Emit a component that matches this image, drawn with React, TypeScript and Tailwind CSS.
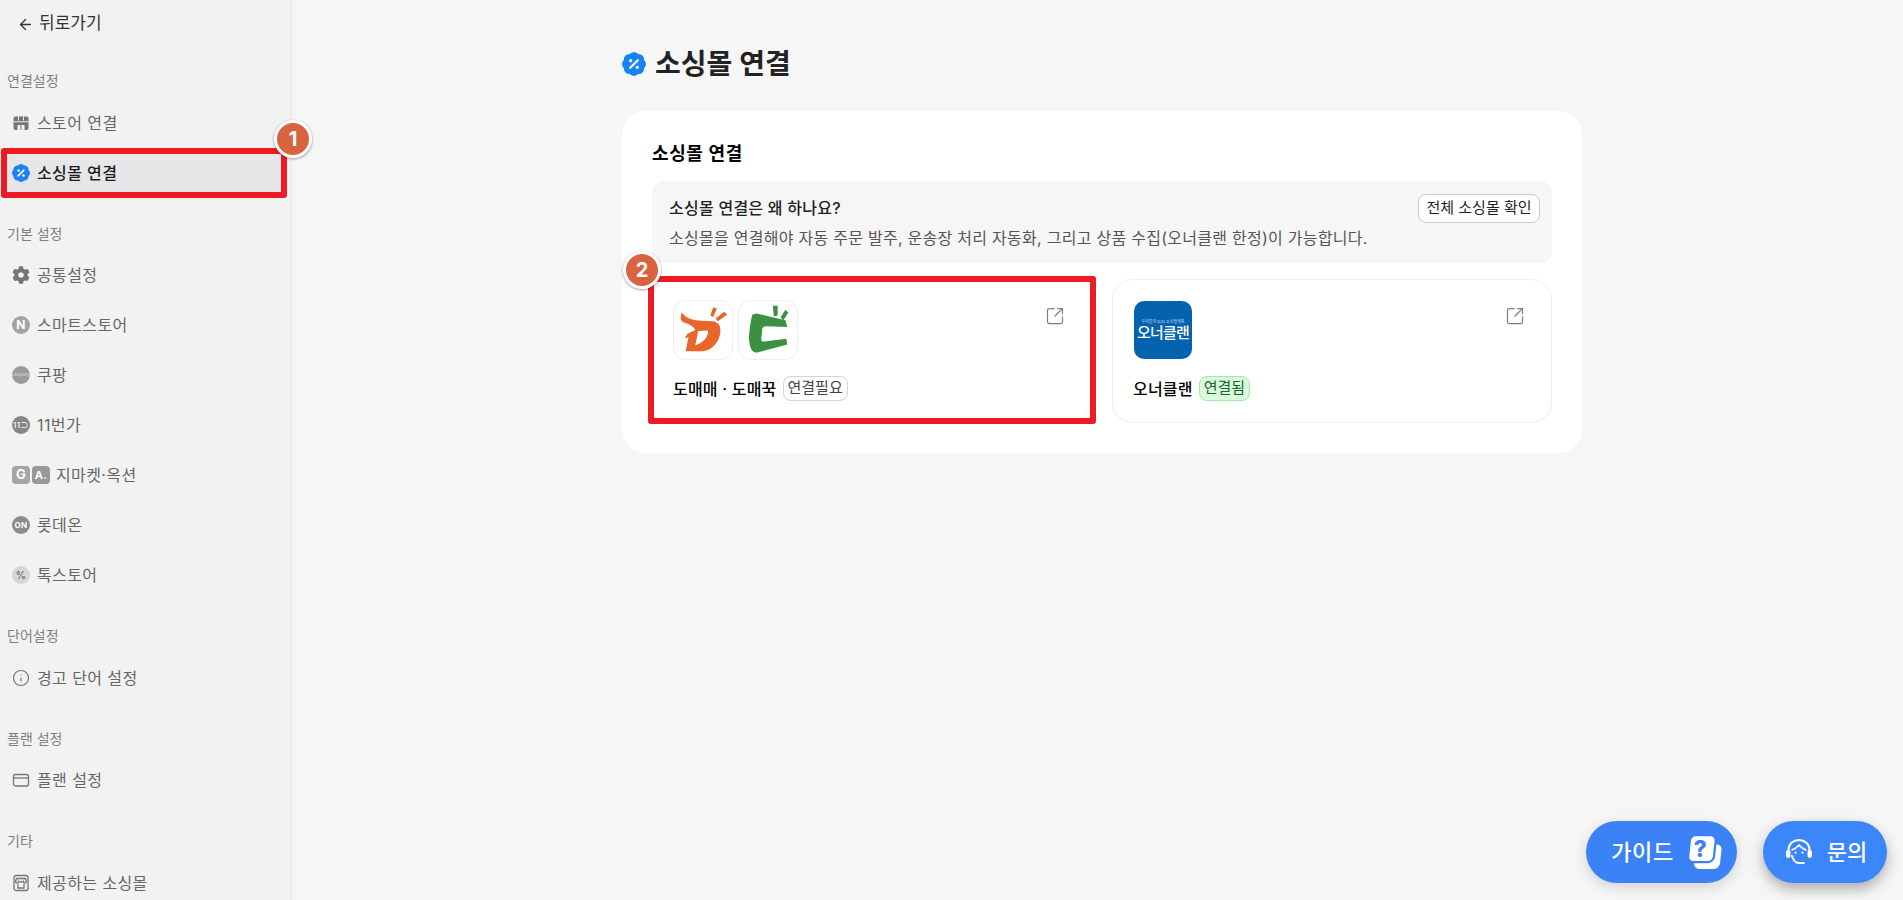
import { ArrowLeft, Info, SquareArrowOutUpRight } from "lucide-react"
import { FaCog } from "react-icons/fa"
import type { ReactNode } from "react"

const PercentBadge = ({ className }: { className: string }) => (
  <svg viewBox="1 1 22 22" className={className}>
    <path
      fill="#1a82f7"
      stroke="#1a82f7"
      strokeWidth="2"
      d="M3.85 8.62a4 4 0 0 1 4.78-4.77 4 4 0 0 1 6.74 0 4 4 0 0 1 4.78 4.78 4 4 0 0 1 0 6.74 4 4 0 0 1-4.77 4.78 4 4 0 0 1-6.75 0 4 4 0 0 1-4.78-4.77 4 4 0 0 1 0-6.76Z"
    />
    <path d="M15.5 8.5l-7 7" stroke="#fff" strokeWidth="2" strokeLinecap="round" />
    <circle cx="9" cy="9" r="1.5" fill="#fff" />
    <circle cx="15" cy="15" r="1.5" fill="#fff" />
  </svg>
)

const StoreIcon = () => (
  <svg viewBox="0 0 18 18" className="w-[18px] h-[18px]">
    <rect x="1.5" y="2.5" width="15" height="13.5" rx="2" fill="#757575" />
    <path d="M1.5 7.8h15" stroke="#f2f2f2" strokeWidth="1" />
    <path d="M6.5 2.5v4M11.5 2.5v4" stroke="#f2f2f2" strokeWidth="1" />
    <path d="M5.5 11h7v5h-7z" fill="#f2f2f2" />
    <path d="M9 11v5" stroke="#757575" strokeWidth="1" />
  </svg>
)

const Circle = ({ bg, children }: { bg: string; children: ReactNode }) => (
  <span className={`w-[18px] h-[18px] rounded-full flex items-center justify-center text-white font-bold ${bg}`}>
    {children}
  </span>
)

const PlanIcon = () => (
  <svg viewBox="0 0 18 18" className="w-[18px] h-[18px]" fill="none" stroke="#757575" strokeWidth="1.3">
    <rect x="1.5" y="3.5" width="15" height="11.5" rx="2" />
    <path d="M1.5 7h15" />
  </svg>
)

const ShopIcon = () => (
  <svg viewBox="0 0 18 18" className="w-[18px] h-[18px]" fill="none" stroke="#757575" strokeWidth="1.3">
    <rect x="2" y="1.5" width="14" height="15" rx="2" />
    <path d="M4.5 4.5h9l1 3a1.5 1.5 0 0 1-3 0 1.5 1.5 0 0 1-2.5 0 1.5 1.5 0 0 1-2.5 0 1.5 1.5 0 0 1-3 0z" />
    <path d="M6 10v4h6v-4" />
  </svg>
)

const SideItem = ({ icon, label, active }: { icon: ReactNode; label: string; active?: boolean }) => (
  <div
    className={`h-10 rounded-md flex items-center gap-[7px] px-1.5 text-base tracking-[0.4px] ${active ? "bg-[#e6e6e8] text-[#1c1c1c] font-medium" : "text-[#666666]"}`}
  >
    {icon}
    <span>{label}</span>
  </div>
)

const SideSection = ({ title, children }: { title: string; children: ReactNode }) => (
  <div className="mb-[31px]">
    <p className="h-5 leading-5 text-sm text-[#808080] pl-px mb-[11.5px]">{title}</p>
    <div className="flex flex-col gap-2.5">{children}</div>
  </div>
)

const Marker = ({ n, className }: { n: number; className: string }) => (
  <span
    className={`absolute z-10 w-[38px] h-[38px] rounded-full bg-[#d9633f] border-[3px] border-white shadow-[0_1px_3px_rgba(0,0,0,0.4)] flex items-center justify-center text-white text-xl font-bold ${className}`}
  >
    {n}
  </span>
)

const Sidebar = () => (
  <aside className="relative z-10 w-[292px] h-full shrink-0 bg-[#f2f2f2] border-r border-[#e6e6e6] pl-1.5 pr-[9px]">
    <div className="h-12 flex items-center gap-[5px] pl-[11px] text-[#333333] text-[17px] mb-[23px]">
      <ArrowLeft className="w-[17px] h-[17px]" strokeWidth={1.8} />
      <span>뒤로가기</span>
    </div>
    <SideSection title="연결설정">
      <SideItem icon={<StoreIcon />} label="스토어 연결" />
      <div className="relative">
        <SideItem active icon={<PercentBadge className="w-[18px] h-[18px]" />} label="소싱몰 연결" />
        <div className="absolute -inset-x-[5px] -inset-y-[5px] border-[6px] border-[#ed1c24] rounded-[3px]" />
        <Marker n={1} className="left-[268px] -top-[33px]" />
      </div>
    </SideSection>
    <SideSection title="기본 설정">
      <SideItem icon={<FaCog className="w-[18px] h-[18px] text-[#757575]" />} label="공통설정" />
      <SideItem icon={<Circle bg="bg-[#a3a3a3]"><span className="text-[12px] leading-none">N</span></Circle>} label="스마트스토어" />
      <SideItem icon={<Circle bg="bg-[#9a9a9a]"><span className="text-[4px] leading-none opacity-70 font-normal">coupang</span></Circle>} label="쿠팡" />
      <SideItem icon={<Circle bg="bg-[#868686]"><span className="text-[8px] leading-none font-medium">11⊃</span></Circle>} label="11번가" />
      <SideItem
        icon={
          <span className="flex gap-0.5 -mr-px">
            <span className="w-[18px] h-[18px] rounded-[4px] bg-[#a5a5a5] flex items-center justify-center text-white text-[13px] font-bold">G</span>
            <span className="w-[18px] h-[18px] rounded-[4px] bg-[#999999] flex items-center justify-center text-white text-[11px] font-bold">A.</span>
          </span>
        }
        label="지마켓·옥션"
      />
      <SideItem icon={<Circle bg="bg-[#8c8c8c]"><span className="text-[8px] leading-none">ON</span></Circle>} label="롯데온" />
      <SideItem icon={<Circle bg="bg-[#d6d6d6]"><span className="text-[10px] leading-none text-[#777777]">%</span></Circle>} label="톡스토어" />
    </SideSection>
    <SideSection title="단어설정">
      <SideItem icon={<Info className="w-[18px] h-[18px] text-[#757575]" strokeWidth={1.6} />} label="경고 단어 설정" />
    </SideSection>
    <SideSection title="플랜 설정">
      <SideItem icon={<PlanIcon />} label="플랜 설정" />
    </SideSection>
    <SideSection title="기타">
      <SideItem icon={<ShopIcon />} label="제공하는 소싱몰" />
    </SideSection>
  </aside>
)

const DomaeLogo = () => (
  <svg viewBox="0 0 60 60" className="w-full h-full">
    <path
      fill="#e7662a"
      fillRule="evenodd"
      d="M8 12C11 16 14 18 20 19.500C26 21 34 20.500 40 21C45 21.500 48 25 48 30C48 41 40 52 28 52L12 52L15 37.500L11 38.500L14 34L22 30C20 26 15 23.500 11 22.500C7 21.500 6 18 8 12ZM25 31L34 30.500C35.500 30.500 35.500 33 34.500 35.500C33 40 28 44 22 46Z"
    />
    <path fill="#e7662a" d="M40.500 6.500L44.500 8L40.500 16.500L37.500 15ZM52 11L55 14L45.500 21L43 18Z" />
  </svg>
)

const DomaeggLogo = () => (
  <svg viewBox="0 0 60 60" className="w-full h-full">
    <path
      fill="#3a9142"
      d="M18 13L48 20L50 27L28 26C25 26 24 28 24 30L23 39C23 41 24 42 26 42L49 39L50 45L20 53C16 54 13 52 12 48C10 42 10 36 11 30C12 22 13 16 14 14Z"
    />
    <path fill="#3a9142" d="M35 5l5 0 0 10-4 1zM48 9l3 3-5 8-3-3z" />
  </svg>
)

const OwnerclanLogo = () => (
  <div className="w-[58px] h-[58px] ml-px mt-px rounded-[10px] bg-[#0562ae] flex flex-col items-center justify-center text-white">
    <span className="text-[4px] leading-[5px] opacity-70 whitespace-nowrap">우리들의 B2B 소싱플랫폼</span>
    <span className="text-[15px] leading-[18px] font-medium tracking-[-0.8px] whitespace-nowrap">오너클랜</span>
  </div>
)

const GuideIcon = () => (
  <svg viewBox="0 0 32 32" className="w-9 h-9 -my-1">
    <rect x="7" y="9" width="23" height="22" rx="5" fill="#fff" transform="skewX(-6) translate(3 0)" />
    <rect x="2" y="1" width="23" height="24" rx="5" fill="#fff" stroke="#3b82f6" strokeWidth="2" transform="skewX(-6) translate(2 0)" />
    <text x="13" y="20" textAnchor="middle" fontSize="20" fontWeight="800" fill="#3b82f6" fontFamily="Inter, sans-serif">?</text>
  </svg>
)

const HeadsetIcon = () => (
  <svg viewBox="0 0 28 28" className="w-7 h-7" fill="none" stroke="#fff" strokeWidth="2" strokeLinecap="round">
    <path d="M3.5 14v-2.500a10.500 9.500 0 0 1 21 0V14" />
    <path d="M7 12c3-1 5-2.500 7-5 2 2.500 4 4 7 5" strokeWidth="1.6" />
    <path d="M7 18c1 4 4 7 7 7h5" />
    <rect x="2" y="13" width="2.5" height="6" rx="1.2" fill="#fff" />
    <rect x="23.5" y="13" width="2.5" height="6" rx="1.2" fill="#fff" />
    <path d="M10.5 14.5v.2M17.5 14.5v.2" />
  </svg>
)

const SourcingCard = ({ logos, name, badge }: { logos: ReactNode; name: string; badge: ReactNode }) => (
  <div className="relative h-36 rounded-[20px] border border-[#eeeeee] p-5">
    <SquareArrowOutUpRight className="absolute top-[26px] right-[26px] w-5 h-5 text-[#808080]" strokeWidth={1.5} />
    <div className="flex gap-[5px] h-[60px]">{logos}</div>
    <div className="mt-[16px] flex items-center gap-[6px] h-[25px] text-base tracking-[0.2px] text-black font-medium">
      <span>{name}</span>
      {badge}
    </div>
  </div>
)

const LogoBox = ({ children }: { children: ReactNode }) => (
  <div className="w-[60px] h-[60px] rounded-[12px] border border-[#eeeeee] overflow-hidden">{children}</div>
)

export default function App() {
  return (
    <div className="relative h-screen overflow-hidden flex bg-[#f6f6f6] font-['Inter','Noto_Sans_CJK_KR',sans-serif]">
      <Sidebar />
      <main className="flex-1 flex justify-center pl-[9px]">
        <div className="w-[960px] pt-11">
          <div className="h-10 flex items-center gap-[9px] mb-[27px]">
            <PercentBadge className="w-6 h-6" />
            <h1 className="text-[28px] font-semibold text-[#222222]">소싱몰 연결</h1>
          </div>
          <section className="bg-white rounded-3xl px-[30px] pt-[31px] pb-[30px]">
            <h2 className="h-6 leading-6 text-lg tracking-[0.6px] font-semibold text-black mb-[15px]">소싱몰 연결</h2>
            <div className="relative h-[82px] rounded-xl bg-[#f6f6f6] px-[17px] pt-[13px]">
              <p className="text-base font-medium text-[#222222] leading-7 tracking-[0.25px]">소싱몰 연결은 왜 하나요?</p>
              <p className="text-base text-[#555555] leading-8 tracking-[0.27px]">
                소싱몰을 연결해야 자동 주문 발주, 운송장 처리 자동화, 그리고 상품 수집(오너클랜 한정)이 가능합니다.
              </p>
              <button className="absolute top-[13px] right-3 w-[122px] h-[29px] rounded-lg border border-[#cccccc] bg-white text-[15px] text-[#222222]">
                전체 소싱몰 확인
              </button>
            </div>
            <div className="grid grid-cols-2 gap-5 mt-4">
              <div className="relative">
                <SourcingCard
                  logos={
                    <>
                      <LogoBox><DomaeLogo /></LogoBox>
                      <LogoBox><DomaeggLogo /></LogoBox>
                    </>
                  }
                  name="도매매 · 도매꾹"
                  badge={
                    <span className="h-[25px] px-1 rounded-lg border border-[#d4d4d4] flex items-center text-[15px] tracking-normal font-normal text-[#444444]">연결필요</span>
                  }
                />
                <div className="absolute -left-1 -right-1 -top-[3px] -bottom-[1px] border-[6px] border-[#ed1c24] rounded-[3px]" />
                <Marker n={2} className="-left-[29px] -top-[28px]" />
              </div>
              <SourcingCard
                logos={<OwnerclanLogo />}
                name="오너클랜"
                badge={
                  <span className="h-[25px] px-1 rounded-lg border border-[#a6e6a6] bg-[#d9fbd9] flex items-center text-[15px] tracking-normal font-normal text-[#166534]">연결됨</span>
                }
              />
            </div>
          </section>
        </div>
      </main>
      <div className="absolute right-4 bottom-[17px] flex gap-[26px]">
        <button className="w-[151px] h-[62px] rounded-full bg-[#3b82f6] shadow-[0_4px_14px_rgba(0,0,0,0.15)] flex items-center justify-center gap-[12px] pl-2.5 text-white text-[22px] tracking-[0.6px] font-medium">
          가이드 <GuideIcon />
        </button>
        <button className="w-[124px] h-[62px] rounded-full bg-[#3b86f8] shadow-[0_6px_14px_rgba(0,0,0,0.3)] flex items-center justify-center gap-[14px] pl-0.5 text-white text-[22px] font-medium">
          <HeadsetIcon /> 문의
        </button>
      </div>
    </div>
  )
}
